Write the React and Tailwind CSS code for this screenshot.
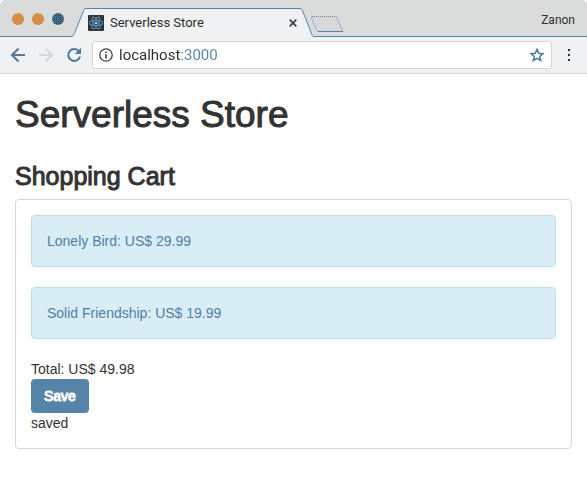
import React from "react";

const items = [
  { name: "Lonely Bird", price: "29.99" },
  { name: "Solid Friendship", price: "19.99" },
];

function ReactLogo() {
  return (
    <svg viewBox="0 0 16 16" className="size-4 shrink-0" aria-hidden="true">
      <rect width="16" height="16" rx="1" fill="#303234" />
      <g fill="none" stroke="#5584a8" strokeWidth="1.200">
        <ellipse cx="8" cy="8" rx="6.500" ry="2.600" />
        <ellipse cx="8" cy="8" rx="6.500" ry="2.600" transform="rotate(60 8 8)" />
        <ellipse cx="8" cy="8" rx="6.500" ry="2.600" transform="rotate(120 8 8)" />
      </g>
      <circle cx="8" cy="8" r="1.300" fill="#a9d3e6" />
    </svg>
  );
}

function TabStrip() {
  return (
    <div className="flex h-[37px] items-end bg-[#dadbdb]">
      <div className="flex h-full w-[72px] shrink-0 items-center gap-2 border-b border-[#5584a8] pl-3 pt-[2px]">
        <button aria-label="Close window" className="size-3 rounded-full bg-[#d98b48]" />
        <button aria-label="Minimize window" className="size-3 rounded-full bg-[#d98b48]" />
        <button aria-label="Zoom window" className="size-3 rounded-full">
          <svg viewBox="0 0 12 12" className="size-3">
            <defs>
              <pattern id="weave" width="2" height="2" patternUnits="userSpaceOnUse">
                <rect width="2" height="2" fill="#4d7da1" />
                <rect width="1" height="1" fill="#2b3840" />
                <rect x="1" y="1" width="1" height="1" fill="#3d5f7a" />
              </pattern>
            </defs>
            <circle cx="6" cy="6" r="6" fill="url(#weave)" />
          </svg>
        </button>
      </div>
      <svg viewBox="0 0 14 29" className="h-[29px] w-[14px] shrink-0" aria-hidden="true">
        <path d="M0 29V28.500C1.500 28 2 26 3 24L11 4C12 1.500 12.500.5 14 .5V29Z" fill="#f0f1f2" />
        <path d="M0 28.500C1.500 28 2 26 3 24L11 4C12 1.500 12.500.5 14 .5" fill="none" stroke="#5584a8" />
      </svg>
      <div className="flex h-[29px] w-[214px] items-center border-t border-[#5584a8] bg-[#f0f1f2] pl-[2px]">
        <ReactLogo />
        <span className="ml-[6px] flex-1 whitespace-nowrap font-['Roboto',sans-serif] text-[13px] leading-4 text-[#2b2d2f]">
          Serverless Store
        </span>
        <button aria-label="Close tab" className="flex size-[14px] items-center justify-center">
          <svg viewBox="0 0 8 8" className="size-2">
            <path d="M.7.7 7.300 7.300M7.300.7.7 7.300" stroke="#2f4656" strokeWidth="1.800" />
          </svg>
        </button>
      </div>
      <svg viewBox="0 0 14 29" className="h-[29px] w-[14px] shrink-0" aria-hidden="true">
        <path d="M0 .5C1.500.5 2 1.500 3 4L11 24C12 27 12.500 28.500 14 28.500V29H0Z" fill="#f0f1f2" />
        <path d="M0 .5C1.500.5 2 1.500 3 4L11 24C12 27 12.500 28.500 14 28.500" fill="none" stroke="#5584a8" />
      </svg>
      <div className="flex h-full flex-1 items-start justify-between border-b border-[#5584a8] pr-3">
        <button aria-label="New tab" className="-ml-1 mt-4">
          <svg viewBox="0 0 34 16" className="h-4 w-[34px]">
            <path d="M2 .5H25Q26.500.5 27 2L33 15.500H8.500Q7 15.500 6.500 14L1.500 2Q1 .5 2 .5Z" fill="#d8d8d8" stroke="#5584a8" strokeDasharray="1 1" />
            <path d="M8 15.500H33" stroke="#5584a8" />
          </svg>
        </button>
        <button className="mt-3 font-['Roboto',sans-serif] text-xs leading-4 text-[#2f3133]">Zanon</button>
      </div>
    </div>
  );
}

function Toolbar() {
  return (
    <div className="flex h-[37px] items-center border-b border-[#d4d6d8] bg-[#f0f1f2] pl-[10px] pr-[17px]">
      <button aria-label="Back" className="size-4">
        <svg viewBox="0 0 16 16" className="size-4" fill="none" stroke="#4d7a9d" strokeWidth="2">
          <path d="M15 8H2.500M8.500 1.500 2 8l6.500 6.500" />
        </svg>
      </button>
      <button aria-label="Forward" className="ml-3 size-4">
        <svg viewBox="0 0 16 16" className="size-4" fill="none" stroke="#d6d8da" strokeWidth="2">
          <path d="M1 8H13.500M7.500 1.500 14 8l-6.500 6.500" />
        </svg>
      </button>
      <button aria-label="Reload" className="ml-3 size-4">
        <svg viewBox="0 0 16 16" className="size-4" fill="none">
          <path d="M13 4.300A6 6 0 1 0 14 9.500" stroke="#4d7a9d" strokeWidth="2" />
          <path d="M15 .8V7H8.800Z" fill="#4d7a9d" />
        </svg>
      </button>
      <div className="ml-[10px] flex h-7 min-w-0 flex-1 items-center rounded-[3px] border border-[#d2d4d6] bg-white pl-[6px] pr-[7px]">
        <svg viewBox="0 0 14 14" className="size-[14px] shrink-0" fill="none" aria-hidden="true">
          <circle cx="7" cy="7" r="6.200" stroke="#3b4043" strokeWidth="1.300" />
          <path d="M7 6.200V10.500M7 3.500V5" stroke="#3b4043" strokeWidth="1.600" />
        </svg>
        <input
          aria-label="Address"
          defaultValue="localhost:3000"
          className="ml-[6px] min-w-0 flex-1 bg-[linear-gradient(to_right,#2b2d2f_61px,#5584a8_61px)] bg-clip-text font-['Roboto',sans-serif] text-[15px] leading-5 text-transparent caret-black outline-none"
        />
        <button aria-label="Bookmark this page" className="size-[14px] shrink-0">
          <svg viewBox="0 0 14 14" className="size-[14px]">
            <path d="M7 1.300 8.700 5.200 12.900 5.600 9.700 8.400 10.700 12.500 7 10.300 3.300 12.500 4.300 8.400 1.100 5.600 5.300 5.200Z" fill="none" stroke="#4d7a9d" strokeWidth="1.500" />
          </svg>
        </button>
      </div>
      <button aria-label="Menu" className="ml-4 flex flex-col gap-[3px]">
        <span className="size-[2px] bg-[#303234]" />
        <span className="size-[2px] bg-[#303234]" />
        <span className="size-[2px] bg-[#303234]" />
      </button>
    </div>
  );
}

export default function App() {
  return (
    <div className="min-h-screen overflow-hidden rounded-[5px] bg-white">
      <header>
        <TabStrip />
        <Toolbar />
      </header>
      <main className="px-[15px] pb-10 pt-[21px] font-['Liberation_Sans',Arial,sans-serif] text-sm text-[#333]">
        <h1 className="text-[37px] leading-10 [-webkit-text-stroke:1px_#333]">Serverless Store</h1>
        <h3 className="mt-7 text-[25px] leading-[26px] [-webkit-text-stroke:1px_#333]">Shopping Cart</h3>
        <section className="mt-[10px] rounded border border-[#d8d8d8] p-[15px]">
          <ul>
            {items.map((item) => (
              <li
                key={item.name}
                className="mb-5 rounded border border-[#b8dfe9] bg-[#d9edf6] p-[15px] text-[#5080a5]"
              >
                {item.name}: US$ {item.price}
              </li>
            ))}
          </ul>
          <p>Total: US$ 49.98</p>
          <button className="block rounded bg-[#5584a8] px-[13px] py-[7px] text-white [-webkit-text-stroke:1px_white]">
            Save
          </button>
          <p>saved</p>
        </section>
      </main>
    </div>
  );
}
